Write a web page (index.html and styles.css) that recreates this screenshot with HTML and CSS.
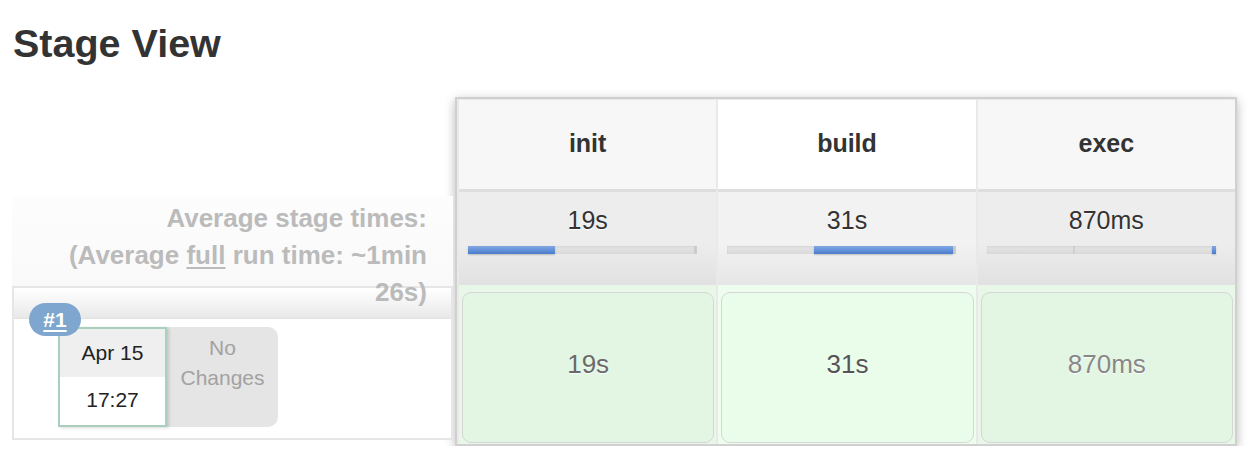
FILE: index.html
```html
<!DOCTYPE html>
<html lang="en">
<head>
<meta charset="utf-8">
<title>Stage View</title>
<link rel="stylesheet" href="styles.css">
</head>
<body>
<h1 class="title">Stage View</h1>
<div class="stage-view">
  <div class="runs">
    <div class="avg-label">Average stage times:<br>(Average <u>full</u> run time: ~1min<br>26s)</div>
    <div class="run">
      <div class="run-head"></div>
      <a class="badge" href="#">#1</a>
      <div class="run-body">
        <div class="date">
          <div class="day">Apr 15</div>
          <div class="time">17:27</div>
        </div>
        <div class="changes">No<br>Changes</div>
      </div>
    </div>
  </div>
  <div class="stages">
    <div class="head">init</div>
    <div class="head hover">build</div>
    <div class="head">exec</div>

    <div class="avg">
      <div class="avg-time">19s</div>
      <div class="track"><span class="fill" style="margin-left:0%;width:38%"></span></div>
    </div>
    <div class="avg hover">
      <div class="avg-time">31s</div>
      <div class="track"><span class="fill" style="margin-left:38%;width:60.5%"></span></div>
    </div>
    <div class="avg">
      <div class="avg-time">870ms</div>
      <div class="track"><span class="mark" style="margin-left:37.5%"></span><span class="fill end" style="width:1.6%"></span></div>
    </div>

    <div class="cell"><div class="box">19s</div></div>
    <div class="cell hover"><div class="box dark">31s</div></div>
    <div class="cell"><div class="box light">870ms</div></div>
  </div>
</div>
</body>
</html>
```
FILE: styles.css
```css
html, body {
  margin: 0;
  padding: 0;
  background: #fff;
}
body {
  font-family: "Liberation Sans", Arial, Helvetica, sans-serif;
  color: #333;
  padding: 0 12px;
  width: 1256px;
  box-sizing: border-box;
}
.title {
  font-size: 39.5px;
  font-weight: bold;
  line-height: 45px;
  margin: 21px 0 0 1px;
  color: #333;
}
.stage-view {
  display: flex;
  align-items: flex-start;
  margin-top: 31px;
}
.runs {
  width: 443px;
  flex: none;
  padding-top: 99px;
}
.avg-label {
  position: relative;
  z-index: 3;
  width: 441px;
  box-sizing: border-box;
  height: 90px;
  background: linear-gradient(#fdfdfd, #f9f9f9);
  padding: 4px 26px 0 0;
  text-align: right;
  font-size: 26px;
  line-height: 37px;
  font-weight: bold;
  color: #bbbbbb;
}
.avg-label u {
  text-decoration-thickness: 2px;
  text-underline-offset: 3px;
}
.run {
  position: relative;
  width: 441px;
  box-sizing: border-box;
  height: 154px;
  border: 2px solid #e6e6e6;
  background: #fff;
}
.run-head {
  height: 30px;
  background: linear-gradient(#ffffff, #f2f2f2 60%, #e8e8e8);
  border-bottom: 1px solid #e2e2e2;
}
.badge {
  position: absolute;
  left: 15px;
  top: 15px;
  width: 52px;
  height: 33px;
  border-radius: 17px;
  background: #7ea6ce;
  color: #fff;
  font-weight: bold;
  font-size: 21px;
  line-height: 33px;
  text-align: center;
  text-decoration: underline;
  text-decoration-thickness: 2px;
  text-underline-offset: 3px;
  z-index: 2;
}
.run-body {
  display: flex;
  margin: 8px 0 0 44px;
}
.date {
  width: 109px;
  height: 100px;
  box-sizing: border-box;
  border: 2px solid #a9d0bd;
  font-size: 21px;
  color: #222;
  text-align: center;
  position: relative;
  z-index: 1;
  box-shadow: 2px 1px 3px rgba(0, 0, 0, 0.15);
  background: #fff;
}
.day {
  height: 48px;
  line-height: 47px;
  background: #efefef;
}
.time {
  height: 48px;
  line-height: 46px;
}
.changes {
  width: 111px;
  height: 100px;
  box-sizing: border-box;
  background: #e5e5e5;
  border-radius: 0 10px 10px 0;
  color: #a2a2a2;
  font-size: 21px;
  line-height: 30px;
  text-align: center;
  padding-top: 6px;
}
.stages {
  width: 782px;
  flex: none;
  box-sizing: border-box;
  border: 2px solid #d0d0d0;
  padding: 1px 0 0 2px;
  background: #e9e9e9;
  display: grid;
  grid-template-columns: repeat(3, 1fr);
  grid-template-rows: 89px 96px 159px;
  column-gap: 2px;
  box-shadow: 0 3px 10px rgba(0, 0, 0, 0.28);
}
.head {
  background: #f7f7f7;
  display: flex;
  align-items: center;
  justify-content: center;
  font-size: 25px;
  font-weight: bold;
  color: #333;
  padding-bottom: 2px;
}
.head.hover {
  background: #fff;
}
.avg {
  border-top: 3px solid #dedede;
  background: linear-gradient(#ededed, #ededed 55%, #e1e1e1);
  text-align: center;
}
.avg.hover {
  background: linear-gradient(#f2f2f2, #f2f2f2 55%, #e6e6e6);
}
.avg-time {
  font-size: 25px;
  line-height: 30px;
  padding-top: 13px;
  color: #333;
  text-shadow: 0 1px 1px #fff;
}
.track {
  display: flex;
  margin: 11px 0 0 9px;
  width: 229px;
  height: 8px;
  background: linear-gradient(#e6e6e6, #d9d9d9);
  box-shadow: inset -3px 0 0 #cccccc, inset 0 1px 2px rgba(0, 0, 0, 0.08);
}
.fill {
  display: block;
  height: 8px;
  background: linear-gradient(#80a8e4, #4a7ccc);
  box-shadow: 0 1px 2px rgba(0, 0, 0, 0.2);
}
.fill.end {
  margin-left: auto;
}
.mark {
  display: block;
  width: 2px;
  height: 8px;
  background: #cfcfcf;
}
.cell {
  background: #e8f7e8;
  padding: 7px 2px 1px 3px;
}
.cell.hover {
  background: #eefdee;
}
.box {
  height: 100%;
  box-sizing: border-box;
  border: 1.5px solid #d6d6d6;
  border-radius: 9px;
  background: #e2f6e3;
  display: flex;
  align-items: center;
  justify-content: center;
  padding-bottom: 6px;
  font-size: 26px;
  color: #6a6a6a;
  text-shadow: 0 1px 1px #fff;
}
.cell.hover .box {
  background: #e9fdea;
}
.box.dark {
  color: #555;
}
.box.light {
  color: #888;
}
```
